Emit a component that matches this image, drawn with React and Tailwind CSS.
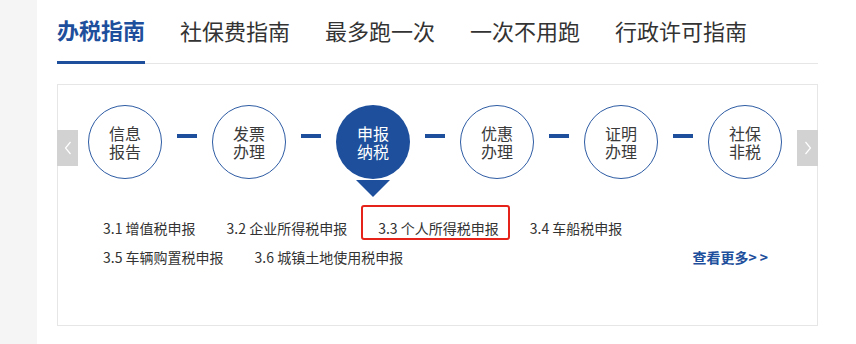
import React from 'react';

const tabs = ['办税指南', '社保费指南', '最多跑一次', '一次不用跑', '行政许可指南'];

const steps = [
  ['信息', '报告'],
  ['发票', '办理'],
  ['申报', '纳税'],
  ['优惠', '办理'],
  ['证明', '办理'],
  ['社保', '非税'],
];

const ArrowButton = ({ dir }) => (
  <div
    className={`absolute top-[45px] w-[21px] h-[36px] bg-[#d2d2d2] flex items-center justify-center ${
      dir === 'left' ? 'left-[-1px]' : 'right-[-1px]'
    }`}
  >
    <svg width="8" height="14" viewBox="0 0 8 14" fill="none">
      {dir === 'left' ? (
        <polyline points="6.5,1 1.5,7 6.5,13" stroke="#fff" strokeWidth="1.2" />
      ) : (
        <polyline points="1.5,1 6.5,7 1.5,13" stroke="#fff" strokeWidth="1.2" />
      )}
    </svg>
  </div>
);

const App = () => {
  const active = 2;

  return (
    <div
      className="flex w-[856px] h-[344px] bg-white text-[#333]"
      style={{ fontFamily: '"Noto Sans CJK SC", "Noto Sans", sans-serif' }}
    >
      {/* left gray strip */}
      <div className="w-[37px] h-full bg-[#f5f5f5]" />

      <div className="w-[761px] ml-[20px]">
        {/* Tabs */}
        <div className="flex gap-[35px] h-[64px] border-b border-[#e6e6e6]">
          {tabs.map((tab, i) => (
            <div
              key={tab}
              className={`flex items-center pb-[4px] text-[22px] leading-none ${
                i === 0
                  ? 'h-[64px] -mb-px border-b-[3px] border-[#1d4f9c] text-[#1d4f9c] font-bold'
                  : 'h-[63px] text-[#333]'
              }`}
            >
              {tab}
            </div>
          ))}
        </div>

        {/* Guide box */}
        <div className="relative mt-[20px] h-[242px] border border-[#e6e6e6]">
          <ArrowButton dir="left" />
          <ArrowButton dir="right" />

          {/* Steps */}
          <div className="flex items-start pl-[30px] pt-[20px]">
            {steps.map((s, i) => (
              <React.Fragment key={i}>
                {i > 0 && <div className="mx-[15px] mt-[29px] w-[20px] h-[4px] bg-[#1d4f9c]" />}
                <div className="flex flex-col items-center">
                  <div
                    className={`w-[74px] h-[74px] rounded-full flex items-center justify-center text-center text-[16px] leading-[18px] ${
                      i === active
                        ? 'bg-[#1d4f9c] text-white'
                        : 'border border-[#2d5ba3] text-[#3a3a3a]'
                    }`}
                  >
                    <p>
                      {s[0]}
                      <br />
                      {s[1]}
                    </p>
                  </div>
                  {i === active && (
                    <div className="mt-[1px] w-0 h-0 border-l-[17px] border-r-[17px] border-t-[17px] border-l-transparent border-r-transparent border-t-[#1d4f9c]" />
                  )}
                </div>
              </React.Fragment>
            ))}
          </div>

          {/* Links */}
          <div className="mt-[21px] pl-[45px] pr-[46px] text-[14px] leading-[20px] text-[#333]">
            <div className="flex gap-[31px]">
              <span>3.1 增值税申报</span>
              <span>3.2 企业所得税申报</span>
              <span className="relative">
                3.3 个人所得税申报
                <span className="absolute -left-[17px] -right-[11px] -top-[13px] -bottom-[2px] border-2 border-[#e5231b] rounded-[3px]" />
              </span>
              <span>3.4 车船税申报</span>
            </div>
            <div className="flex gap-[31px] mt-[9px]">
              <span>3.5 车辆购置税申报</span>
              <span>3.6 城镇土地使用税申报</span>
              <span className="ml-auto font-bold text-[#1d4f9c]">
                查看更多<span className="tracking-[3px]">&gt;&gt;</span>
              </span>
            </div>
          </div>
        </div>
      </div>
    </div>
  );
};

export default App;
